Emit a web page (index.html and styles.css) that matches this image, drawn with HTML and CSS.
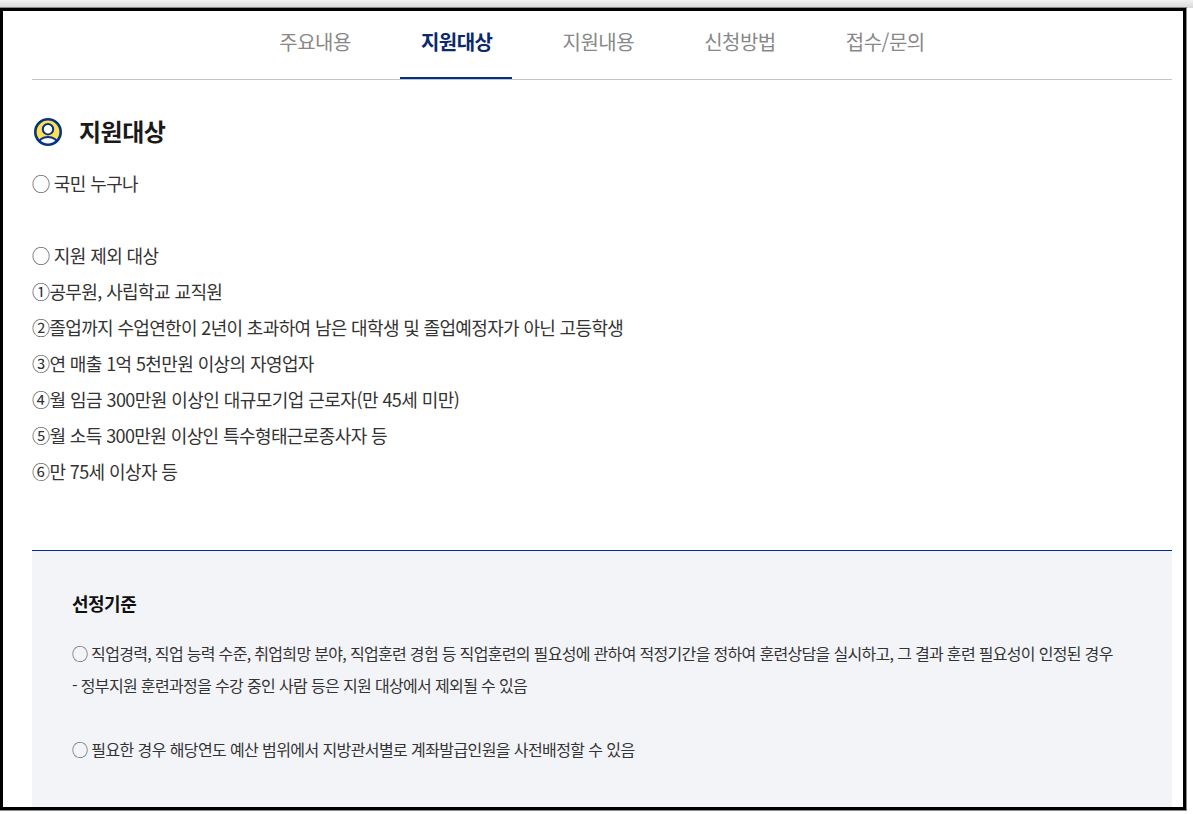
FILE: index.html
```html
<!DOCTYPE html>
<html lang="ko">
<head>
<meta charset="utf-8">
<title>지원대상</title>
<link rel="stylesheet" href="styles.css">
</head>
<body>
<div class="topbar"></div>
<main class="frame">
  <nav class="tabs">
    <a class="tab">주요내용</a>
    <a class="tab active">지원대상</a>
    <a class="tab">지원내용</a>
    <a class="tab">신청방법</a>
    <a class="tab">접수/문의</a>
  </nav>
  <h2 class="heading">
    <svg class="heading-icon" viewBox="0 0 28 28" aria-hidden="true">
      <defs><clipPath id="c"><circle cx="14" cy="14" r="12.8"/></clipPath></defs>
      <circle cx="14" cy="14" r="12.8" fill="#ffdf55"/>
      <g clip-path="url(#c)">
        <ellipse cx="14" cy="26" rx="9.6" ry="7" fill="#fff" stroke="#053580" stroke-width="2"/>
      </g>
      <circle cx="14" cy="14" r="12.7" fill="none" stroke="#053580" stroke-width="2.6"/>
      <circle cx="14" cy="11.2" r="5.2" fill="#fff" stroke="#053580" stroke-width="2"/>
    </svg>
    <span class="heading-text">지원대상</span>
  </h2>
  <div class="target">
    <p>◯ 국민 누구나</p>
    <p>&nbsp;</p>
    <p>◯ 지원 제외 대상</p>
    <p>①공무원, 사립학교 교직원</p>
    <p class="tight">②졸업까지 수업연한이 2년이 초과하여 남은 대학생 및 졸업예정자가 아닌 고등학생</p>
    <p>③연 매출 1억 5천만원 이상의 자영업자</p>
    <p class="loose">④월 임금 300만원 이상인 대규모기업 근로자(만 45세 미만)</p>
    <p>⑤월 소득 300만원 이상인 특수형태근로종사자 등</p>
    <p>⑥만 75세 이상자 등</p>
  </div>
  <section class="criteria">
    <h3>선정기준</h3>
    <p class="tight">◯ 직업경력, 직업 능력 수준, 취업희망 분야, 직업훈련 경험 등 직업훈련의 필요성에 관하여 적정기간을 정하여 훈련상담을 실시하고, 그 결과 훈련 필요성이 인정된 경우</p>
    <p>- 정부지원 훈련과정을 수강 중인 사람 등은 지원 대상에서 제외될 수 있음</p>
    <p>&nbsp;</p>
    <p class="loose">◯ 필요한 경우 해당연도 예산 범위에서 지방관서별로 계좌발급인원을 사전배정할 수 있음</p>
  </section>
</main>
</body>
</html>
```
FILE: styles.css
```css
html, body { margin: 0; padding: 0; height: 100%; overflow: hidden; background: #fff; }
body { font-family: "Noto Sans CJK KR", "Noto Sans", sans-serif; color: #333; }
.topbar { height: 8px; background: linear-gradient(#f2f2f2, #d8d8d8); }
.frame {
  box-sizing: border-box;
  width: 1186px;
  height: 802px;
  border: 3px solid #000;
  box-shadow: 0 0 0 1px #8a8a8a;
  padding: 0 11px 0 29px;
  overflow: hidden;
  background: #fff;
}
.tabs {
  display: flex;
  justify-content: center;
  gap: 29.5px;
  height: 68px;
  padding-right: 1.5px;
  border-bottom: 1px solid #c4c4c4;
}
.tab {
  padding: 0 19.5px 0 21px;
  font-size: 20px;
  line-height: 62px;
  height: 66px;
  color: #888;
  font-weight: 400;
  border-bottom: 2px solid transparent;
  margin-bottom: -1px;
  letter-spacing: -0.5px;
}
.tab.active { color: #0b2a6e; font-weight: 700; border-bottom-color: #00308a; }
.heading {
  display: flex;
  align-items: center;
  gap: 17px;
  margin: 35px 0 0;
  height: 34px;
  font-size: 24px;
  font-weight: 700;
  letter-spacing: -0.5px;
  color: #1a1a1a;
}
.heading-text { padding-bottom: 4px; }
.heading-icon { width: 28px; height: 28px; margin-left: 2px; flex: none; }
.target { margin-top: 16px; font-size: 18px; line-height: 36px; color: #333; letter-spacing: -0.6px; }
.target p { margin: 0; }
.target .tight { letter-spacing: -0.65px; }
.target .loose { letter-spacing: -0.55px; }
.criteria {
  margin-top: 61px;
  border-top: 1px solid #00308a;
  background: #f3f4f8;
  padding: 39px 40px 60px;
  font-size: 16px;
  line-height: 32px;
  color: #333;
  letter-spacing: -0.65px;
}
.criteria h3 { margin: 0 0 21px; font-size: 18px; line-height: 26px; font-weight: 700; letter-spacing: -0.5px; color: #111; }
.criteria p { margin: 0; }
.criteria .tight { letter-spacing: -0.68px; }
.criteria .loose { letter-spacing: -0.6px; }
```
